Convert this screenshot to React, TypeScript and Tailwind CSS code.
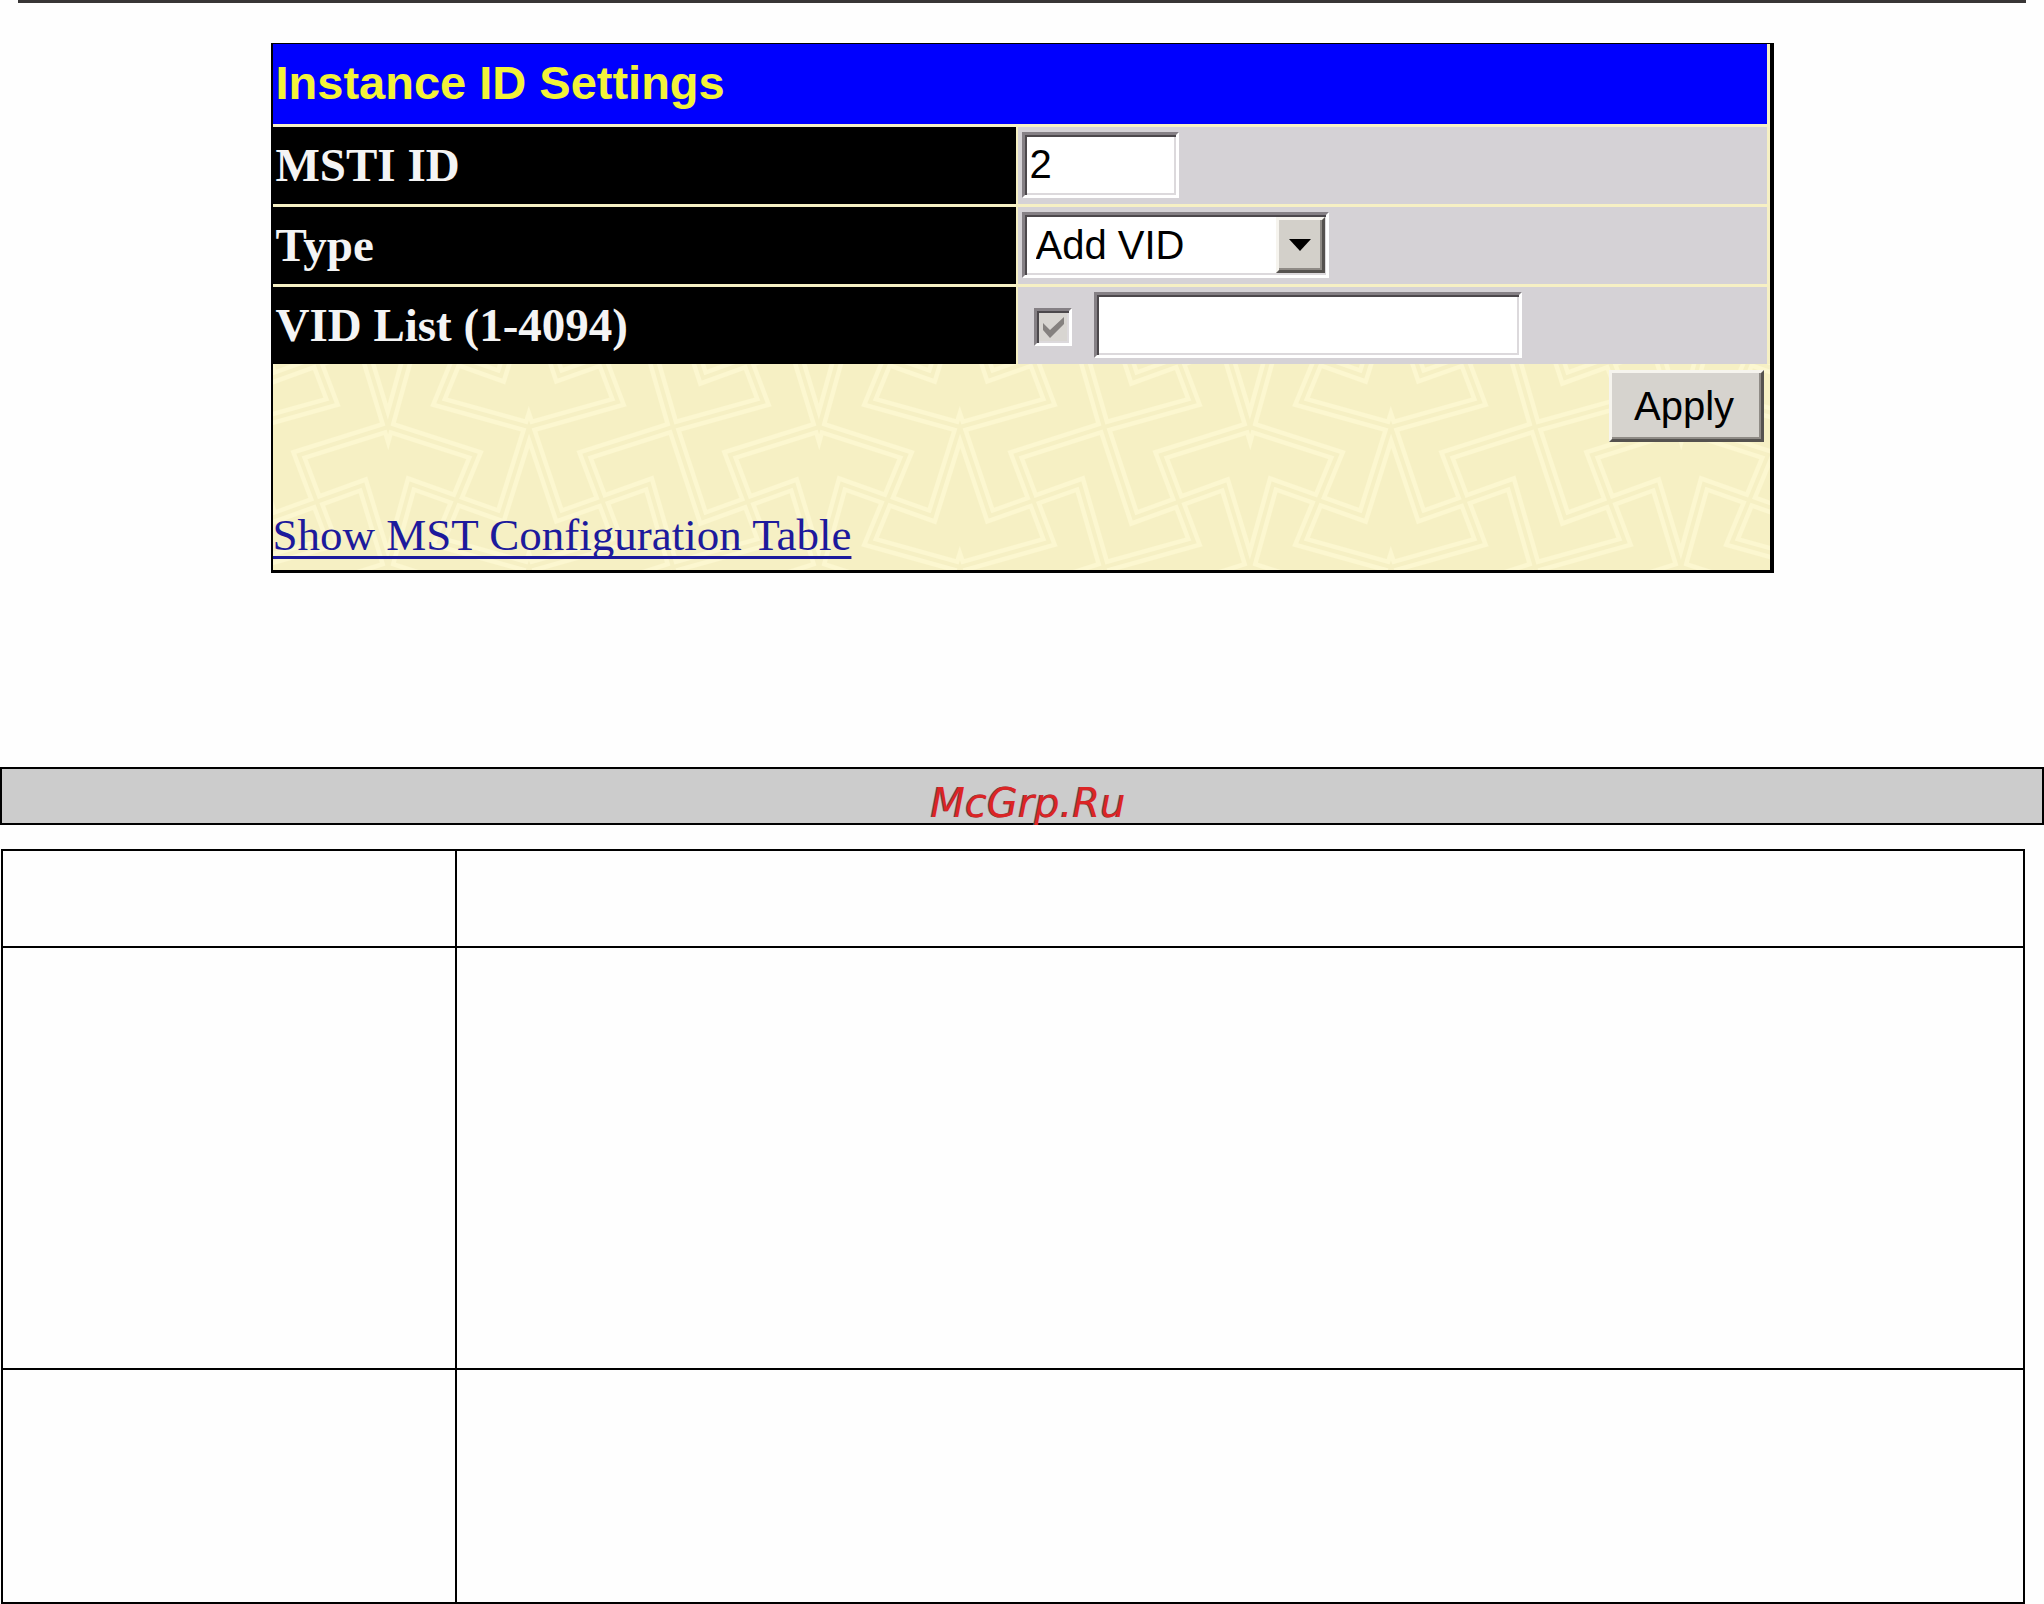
import * as React from "react"

const SUNKEN =
    "border-[3px] border-t-[#858085] border-l-[#858085] border-b-white border-r-white shadow-[inset_2px_2px_0_#4c484c,inset_-2px_-2px_0_#dcd9dc]"

const RAISED =
    "border-[3px] border-t-[#f6f4ee] border-l-[#f6f4ee] border-b-[#55524f] border-r-[#55524f] shadow-[inset_-2px_-2px_0_#8f8b86]"

export default function App() {
    return (
        <div className="min-h-screen w-full overflow-hidden bg-[#fefefe] text-black">
            <div className="mx-[18px] h-[3px] bg-[#383636]" />

            <main className="pt-10">
                <InstanceSettings />

                <div className="mt-[194px] h-[58px] border-2 border-black bg-[#cccccc] pt-[14px] pl-3 text-center font-['DejaVu_Sans',sans-serif] text-[40px] leading-10 italic text-[#db2525] [text-shadow:-1px_0_0_#5a5a66]">
                    McGrp.Ru
                </div>

                <ParameterTable />
            </main>
        </div>
    )
}

function InstanceSettings() {
    const [mstiId, setMstiId] = React.useState("2")
    const [type, setType] = React.useState("Add VID")
    const [vidList, setVidList] = React.useState("")

    return (
        <form
            className="mx-auto flex w-full max-w-[1503px] flex-col border-t border-r-4 border-b-[3px] border-l-2 border-black bg-[#f6f0c4]"
            onSubmit={(e) => e.preventDefault()}
        >
            <div className="flex flex-col gap-[3px] pr-[3px]">
                <h1 className="h-20 bg-[#0000fe] pl-[3px] font-['Liberation_Sans',sans-serif] text-[47px] leading-[78px] font-bold text-[#f2f23a]">
                    Instance ID Settings
                </h1>

                <SettingRow label="MSTI ID" htmlFor="msti-id">
                    <input
                        id="msti-id"
                        type="text"
                        value={mstiId}
                        onChange={(e) => setMstiId(e.target.value)}
                        className={`h-[66px] w-[157px] bg-white pl-[5px] text-[40px] leading-10 outline-none ${SUNKEN}`}
                    />
                </SettingRow>

                <SettingRow label="Type" htmlFor="type">
                    <div className="relative">
                        <select
                            id="type"
                            value={type}
                            onChange={(e) => setType(e.target.value)}
                            className={`block h-[66px] w-[307px] appearance-none bg-white pl-[11px] text-[40px] leading-10 outline-none ${SUNKEN}`}
                        >
                            <option>Add VID</option>
                            <option>Remove VID</option>
                        </select>
                        <span
                            className={`pointer-events-none absolute top-[5px] right-1 flex h-[56px] w-[49px] items-center justify-center bg-[#d3d0ca] ${RAISED}`}
                        >
                            <svg className="h-3 w-[22px]" viewBox="0 0 22 12">
                                <path d="M0 0H22L11 12Z" fill="#000" />
                            </svg>
                        </span>
                    </div>
                </SettingRow>

                <SettingRow label="VID List (1-4094)" htmlFor="vid-list">
                    <span className="relative mt-1 mr-[22px] ml-3 size-[38px]">
                        <input
                            type="checkbox"
                            aria-label="Use VID list"
                            checked
                            disabled
                            readOnly
                            className={`block size-[38px] appearance-none bg-[#d8d5d1] ${SUNKEN}`}
                        />
                        <svg className="pointer-events-none absolute inset-0 size-[38px]" viewBox="0 0 38 38">
                            <path d="M9 15V22L16 30L30 16V9L16 22Z" fill="#85817f" />
                        </svg>
                    </span>
                    <input
                        id="vid-list"
                        type="text"
                        value={vidList}
                        onChange={(e) => setVidList(e.target.value)}
                        className={`h-[66px] w-[428px] bg-white pl-[5px] text-[40px] leading-10 outline-none ${SUNKEN}`}
                    />
                </SettingRow>
            </div>

            <div className="relative flex h-[206px] flex-col justify-between overflow-hidden">
                <Wallpaper />
                <button
                    type="submit"
                    className={`relative mt-[6px] mr-[6px] h-[72px] w-[155px] self-end bg-[#d6d3ce] pr-1 font-['Liberation_Sans',sans-serif] text-[40px] leading-10 ${RAISED}`}
                >
                    Apply
                </button>
                <a
                    href="#mst-table"
                    className="relative mb-[10px] self-start font-['Liberation_Serif',serif] text-[45px] leading-[50px] text-[#1d1a9c] underline decoration-[3px] underline-offset-[6px] [text-decoration-skip-ink:none]"
                >
                    Show MST Configuration Table
                </a>
            </div>
        </form>
    )
}

function SettingRow({ label, htmlFor, children }: { label: string; htmlFor: string; children: React.ReactNode }) {
    return (
        <div className="grid h-[77px] grid-cols-[743fr_749fr] gap-x-[2px]">
            <label
                htmlFor={htmlFor}
                className="flex items-center bg-black pb-[2px] pl-[3px] font-['Liberation_Serif',serif] text-[47px] leading-[60px] font-bold text-[#f4f4f4]"
            >
                {label}
            </label>
            <div className="flex items-center bg-[#d5d2d6] pb-[2px] pl-1 font-['Liberation_Sans',sans-serif]">
                {children}
            </div>
        </div>
    )
}

// Interlaced star pattern, each band is a light stroke with a darker core
function Wallpaper() {
    const bands = [
        "M0 0L30 91L121 58L146 140L169 57L259 89L287 0L317 89L407 57L431 140",
        "M146 0L57 28L90 115L0 140",
        "M146 0L233 28L197 115L287 140",
        "M431 0L343 28L376 115L287 140",
    ].join("")

    return (
        <svg className="absolute inset-0 h-full w-full" aria-hidden="true">
            <defs>
                <g id="bands" fill="none">
                    <path d={bands} />
                    <path d={bands} transform="translate(0 -140)" />
                    <path d={bands} transform="translate(0 140)" />
                    <path d={bands} transform="translate(-431 0)" />
                    <path d={bands} transform="translate(431 0)" />
                </g>
                <pattern id="stars" x="-31" y="63" width="431" height="140" patternUnits="userSpaceOnUse">
                    <use href="#bands" stroke="#fcf7d0" strokeWidth="13" />
                    <use href="#bands" stroke="#f6f0c4" strokeWidth="4" />
                </pattern>
            </defs>
            <rect width="100%" height="100%" fill="url(#stars)" />
        </svg>
    )
}

function ParameterTable() {
    return (
        <table id="mst-table" className="mt-6 ml-px w-[calc(100%-20px)] table-fixed border-collapse">
            <colgroup>
                <col className="w-[454px]" />
                <col />
            </colgroup>
            <tbody>
                <tr className="h-[97px]">
                    <td className="border-2 border-black" />
                    <td className="border-2 border-black" />
                </tr>
                <tr className="h-[422px]">
                    <td className="border-2 border-black" />
                    <td className="border-2 border-black" />
                </tr>
                <tr className="h-[234px]">
                    <td className="border-2 border-black" />
                    <td className="border-2 border-black" />
                </tr>
            </tbody>
        </table>
    )
}
